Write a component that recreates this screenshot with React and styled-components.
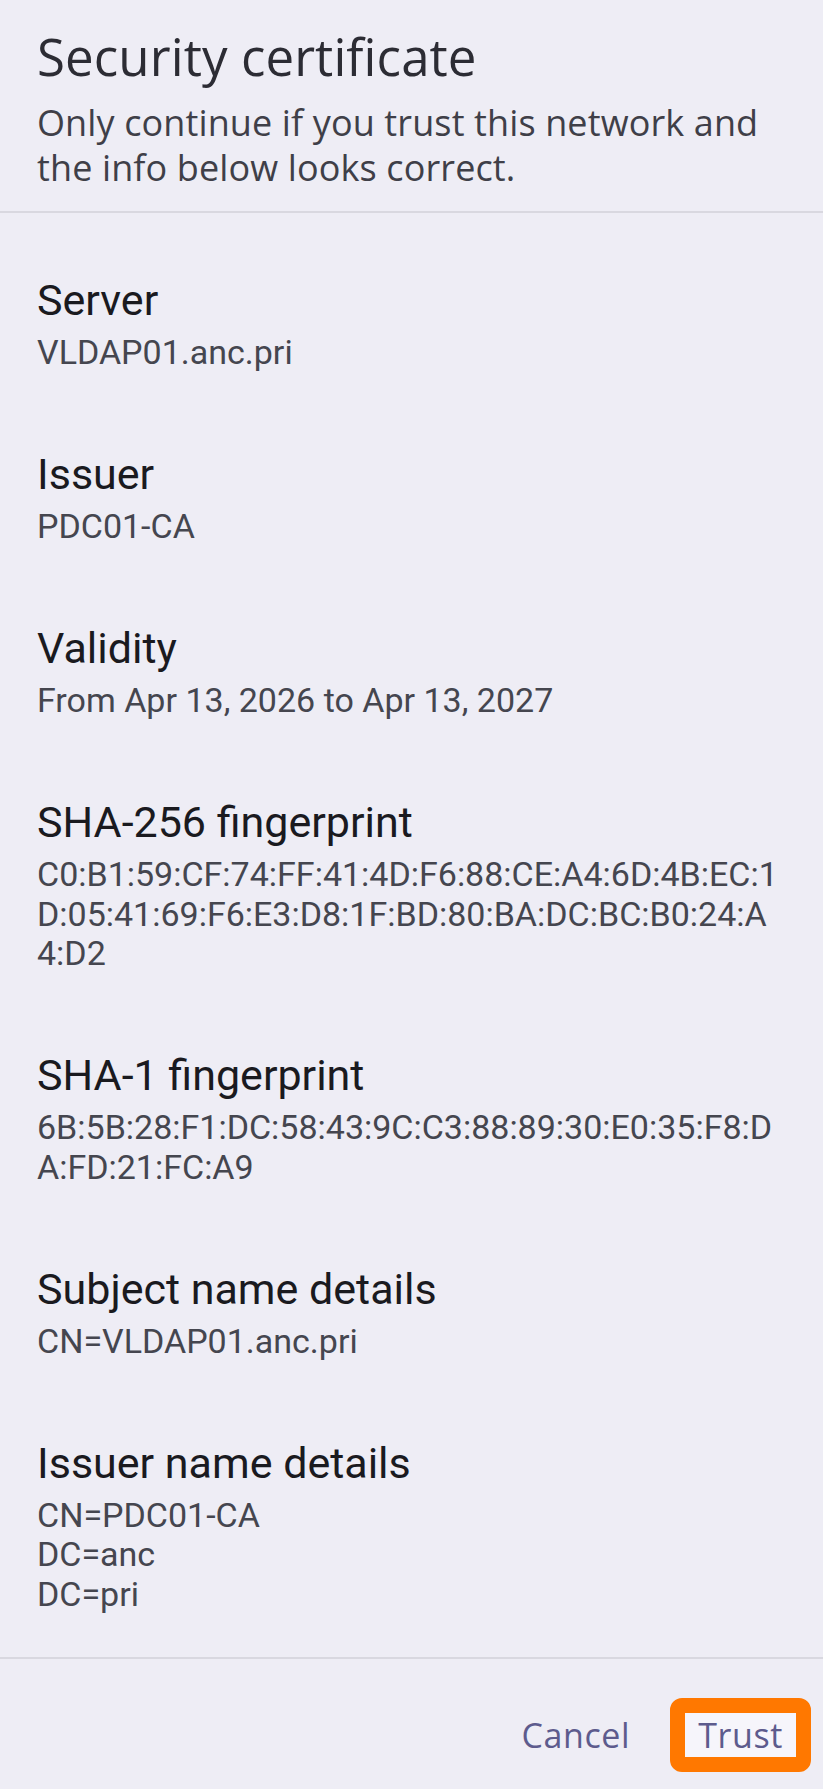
import React from "react";
import styled, { createGlobalStyle } from "styled-components";

const GlobalStyle = createGlobalStyle`
  html, body {
    margin: 0;
    padding: 0;
    background: #eeedf5;
  }
  * { box-sizing: border-box; }
`;

const Page = styled.div`
  display: flex;
  flex-direction: column;
  height: 1789px;
  width: 823px;
  background: #eeedf5;
  overflow: hidden;
`;

const Header = styled.header`
  display: flex;
  flex-direction: column;
  gap: 14px;
  padding: 26px 37px 21px;
  border-bottom: 2px solid #d9d8e0;
`;

const Title = styled.h1`
  margin: 0;
  font-family: "Open Sans", "Noto Sans", sans-serif;
  font-weight: 400;
  font-size: 51px;
  line-height: 60px;
  letter-spacing: 0.1px;
  color: #2c2c34;
`;

const Subtitle = styled.p`
  margin: 0;
  font-family: "Open Sans", "Noto Sans", sans-serif;
  font-weight: 400;
  font-size: 36px;
  line-height: 45px;
  letter-spacing: 0.12px;
  color: #3f3f48;
`;

const Body = styled.main`
  flex: 1;
  overflow: hidden;
  display: flex;
  flex-direction: column;
  gap: 76.5px;
  padding: 62px 37px 0;
`;

const Field = styled.section`
  display: flex;
  flex-direction: column;
  gap: 8px;
`;

const Label = styled.div`
  font-family: Roboto, "Liberation Sans", sans-serif;
  font-weight: 400;
  font-size: 43px;
  line-height: 50px;
  color: #1a1a1f;
`;

const Value = styled.div`
  font-family: Roboto, "Liberation Sans", sans-serif;
  font-weight: 400;
  font-size: 34px;
  line-height: 39.5px;
  color: #45464f;
  white-space: pre-line;
  word-break: break-all;
`;

const Footer = styled.footer`
  display: flex;
  justify-content: flex-end;
  align-items: center;
  gap: 40px;
  padding: 39px 12px 17px;
  border-top: 2px solid #d9d8e0;
`;

const ActionButton = styled.button`
  font-family: "Open Sans", "Noto Sans", sans-serif;
  font-weight: 500;
  font-size: 34px;
  line-height: 44px;
  letter-spacing: 0.6px;
  color: #5d5b8d;
  background: ${(p) => (p.$highlighted ? "#f6f5fb" : "transparent")};
  border: ${(p) => (p.$highlighted ? "15px solid #ff7800" : "none")};
  border-radius: ${(p) => (p.$highlighted ? "12px" : "0")};
  padding: ${(p) => (p.$highlighted ? "0 13px" : "0")};
  margin: 0;
  cursor: pointer;
`;

const fields = [
  { label: "Server", value: "VLDAP01.anc.pri" },
  { label: "Issuer", value: "PDC01-CA" },
  { label: "Validity", value: "From Apr 13, 2026 to Apr 13, 2027" },
  {
    label: "SHA-256 fingerprint",
    value:
      "C0:B1:59:CF:74:FF:41:4D:F6:88:CE:A4:6D:4B:EC:1D:05:41:69:F6:E3:D8:1F:BD:80:BA:DC:BC:B0:24:A4:D2",
  },
  {
    label: "SHA-1 fingerprint",
    value: "6B:5B:28:F1:DC:58:43:9C:C3:88:89:30:E0:35:F8:DA:FD:21:FC:A9",
  },
  { label: "Subject name details", value: "CN=VLDAP01.anc.pri" },
  { label: "Issuer name details", value: "CN=PDC01-CA\nDC=anc\nDC=pri" },
];

export default function App() {
  return (
    <>
      <GlobalStyle />
      <Page>
        <Header>
          <Title>Security certificate</Title>
          <Subtitle>
            Only continue if you trust this network and the info below looks
            correct.
          </Subtitle>
        </Header>
        <Body>
          {fields.map((f) => (
            <Field key={f.label}>
              <Label>{f.label}</Label>
              <Value>{f.value}</Value>
            </Field>
          ))}
        </Body>
        <Footer>
          <ActionButton>Cancel</ActionButton>
          <ActionButton $highlighted>Trust</ActionButton>
        </Footer>
      </Page>
    </>
  );
}
